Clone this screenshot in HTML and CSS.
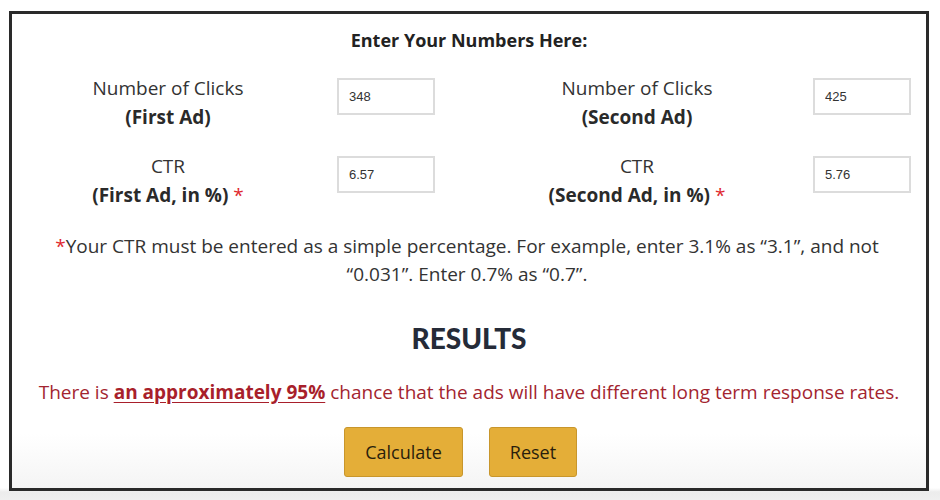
FILE: index.html
```html
<!DOCTYPE html>
<html>
<head>
<meta charset="utf-8">
<link rel="stylesheet" href="styles.css">
</head>
<body>
<div class="calc">
  <h2 class="calc-title">Enter Your Numbers Here:</h2>
  <div class="fields">
    <div class="label">Number of Clicks<br><b>(First Ad)</b></div>
    <div class="field"><input class="num" type="text" value="348"></div>
    <div class="label">Number of Clicks<br><b>(Second Ad)</b></div>
    <div class="field"><input class="num" type="text" value="425"></div>
    <div class="label">CTR<br><b>(First Ad, in %)</b> <span class="req">*</span></div>
    <div class="field"><input class="num" type="text" value="6.57"></div>
    <div class="label">CTR<br><b>(Second Ad, in %)</b> <span class="req">*</span></div>
    <div class="field"><input class="num" type="text" value="5.76"></div>
  </div>
  <p class="note"><span class="req">*</span>Your CTR must be entered as a simple percentage. For example, enter 3.1% as “3.1”, and not “0.031”. Enter 0.7% as “0.7”.</p>
  <h1 class="results-title">RESULTS</h1>
  <p class="result">There is <b class="hl">an approximately 95%</b> chance that the ads will have different long term response rates.</p>
  <div class="buttons">
    <button class="btn btn-calc">Calculate</button>
    <button class="btn btn-reset">Reset</button>
  </div>
</div>
</body>
</html>
```
FILE: styles.css
```css
html {
  background: linear-gradient(to bottom, #ffffff 0, #ffffff 488px, #ececec 492px, #efefef 500px);
  min-height: 100%;
}
body {
  margin: 0;
  padding: 11px 0 0 9px;
  font-family: "Open Sans", Lato, "Liberation Sans", sans-serif;
  color: #333;
}
.calc {
  box-sizing: border-box;
  width: 920px;
  height: 480px;
  border: 3px solid #2a2a2a;
  background: linear-gradient(to bottom, #ffffff 0, #ffffff 420px, #f4f4f4 477px);
  text-align: center;
}
.calc-title {
  margin: 0;
  padding-top: 15px;
  font-size: 18px;
  line-height: 22px;
  font-weight: 700;
  color: #222;
}
.fields {
  display: grid;
  grid-template-columns: 275px 194px 282px 99px;
  row-gap: 20px;
  margin-top: 23px;
  padding-left: 50px;
}
.label {
  width: 212px;
  font-size: 19px;
  line-height: 29px;
  color: #333;
}
.label b { color: #2a2a2a; }
.field {
  text-align: left;
  padding-top: 4px;
}
.num {
  box-sizing: border-box;
  width: 98px;
  height: 37px;
  border: 2px solid #dcdcdc;
  padding: 0 10px;
  font-family: "Liberation Sans", Arial, sans-serif;
  font-size: 13px;
  color: #333;
  background: #fff;
  outline: none;
}
.req { color: #e0282e; }
.note {
  margin: 22px auto 0;
  width: 845px;
  font-size: 19px;
  line-height: 28px;
  color: #333;
  padding-right: 4px;
}
.results-title {
  margin: 32px 0 0;
  font-family: Lato, "Open Sans", sans-serif;
  font-size: 28px;
  line-height: 36px;
  font-weight: 900;
  color: #252b38;
}
.result {
  margin: 22px 0 0;
  font-size: 19px;
  line-height: 28px;
  color: #a3252f;
}
.hl {
  color: #a81f2b;
  text-decoration: underline;
  text-underline-offset: 3px;
}
.buttons {
  display: flex;
  justify-content: center;
  gap: 26px;
  margin-top: 21px;
  padding-right: 17px;
}
.btn {
  height: 50px;
  border: 1px solid #c8962c;
  border-radius: 3px;
  background: #e4ae38;
  font-family: "Open Sans", Lato, sans-serif;
  font-size: 18px;
  color: #2a1e0c;
}
.btn-calc { width: 119px; }
.btn-reset { width: 88px; }
```
